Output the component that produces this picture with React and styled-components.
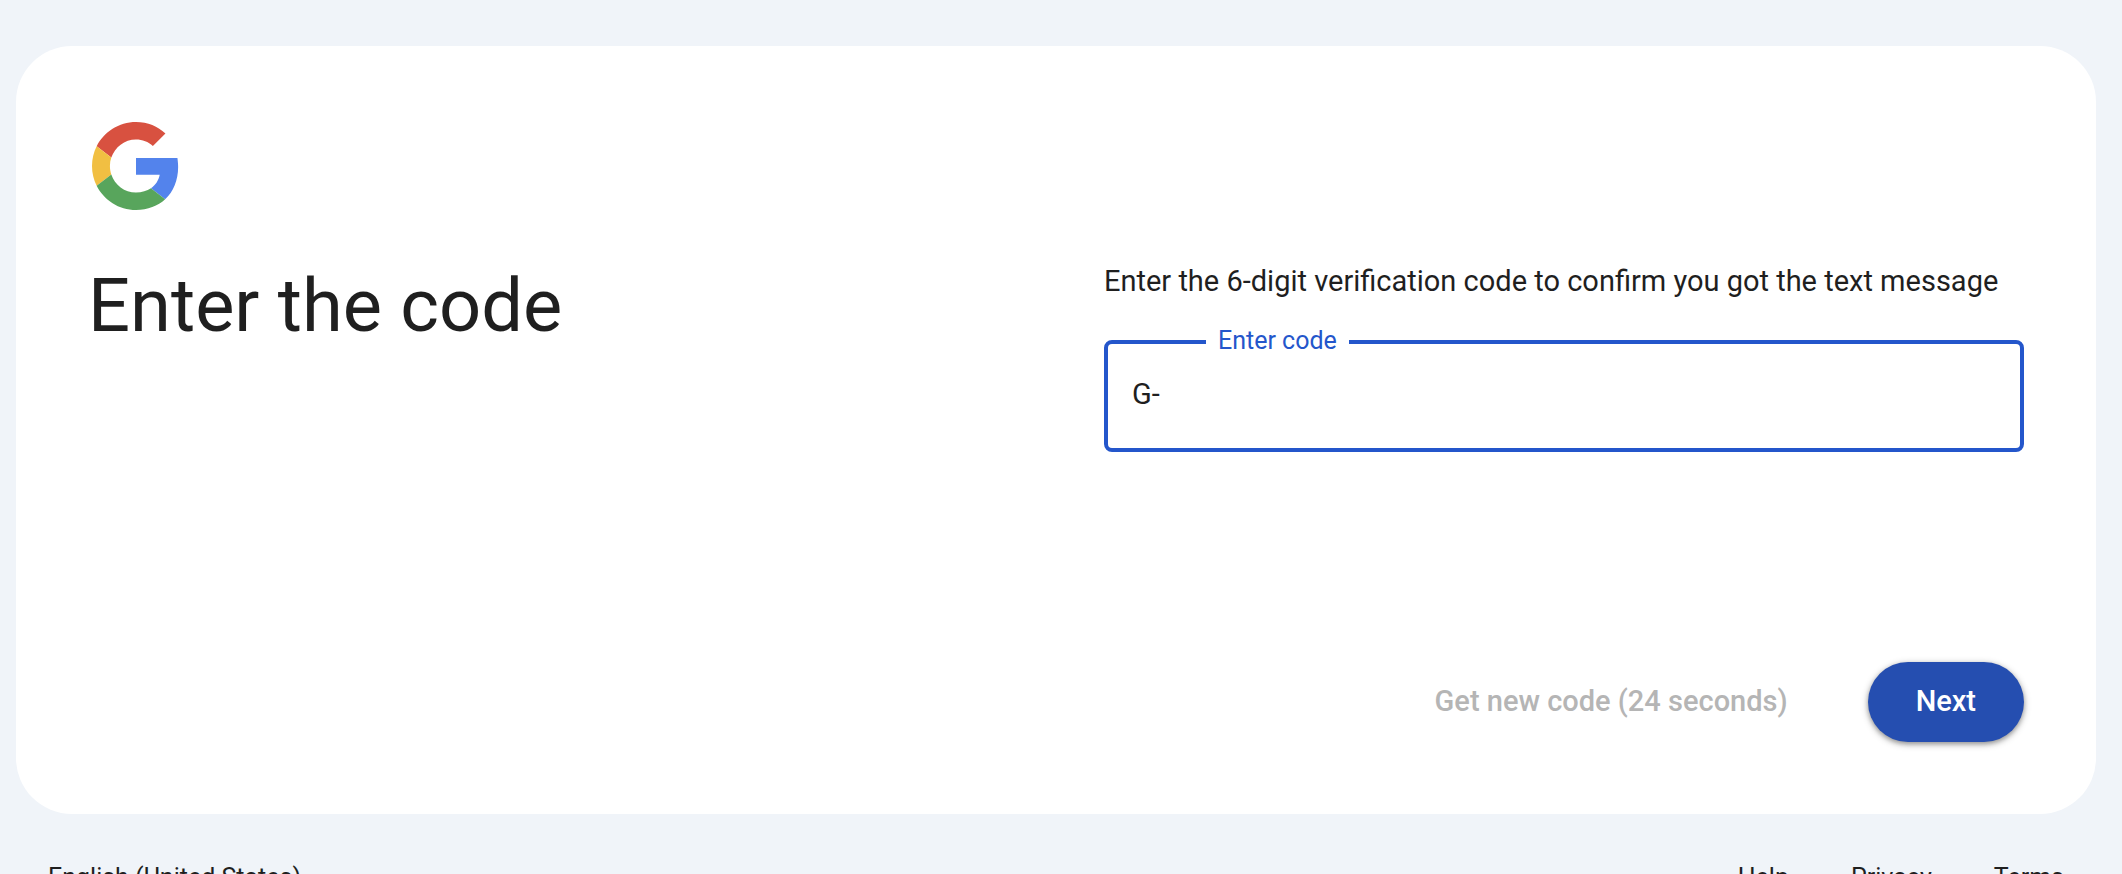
import React, { useState } from "react";
import styled, { createGlobalStyle } from "styled-components";

const GlobalStyle = createGlobalStyle`
  * { box-sizing: border-box; }
  html { scrollbar-width: none; }
  body {
    margin: 0;
    background: #f0f4f9;
    color: #1f1f1f;
    font-family: "Google Sans", Roboto, "Liberation Sans", sans-serif;
    font-size: 29px;
  }
  button, input { font: inherit; }
`;

const Page = styled.div`
  padding: 46px 26px 32px 16px;
`;

const Card = styled.main`
  display: flex;
  flex-direction: column;
  min-height: 768px;
  padding: 72px;
  border-radius: 56px;
  background: #fff;
`;

const Logo = styled.svg`
  width: 96px;
  height: 96px;
  padding: 4px;
`;

const Columns = styled.div`
  display: grid;
  grid-template-columns: 1fr 1fr;
  gap: 96px;
  padding-top: 46px;
`;

const Title = styled.h1`
  margin: 0;
  font-size: 74px;
  line-height: 92px;
  font-weight: 400;
`;

const Hint = styled.p`
  margin: 0 0 38px;
  line-height: 42px;
`;

const Field = styled.div`
  position: relative;
`;

const FieldLabel = styled.label`
  position: absolute;
  top: -14px;
  left: 102px;
  padding: 0 12px;
  background: #fff;
  color: #2456cb;
  font-size: 25px;
  line-height: 30px;
`;

const CodeInput = styled.input`
  display: block;
  width: 100%;
  height: 112px;
  padding: 20px 24px 24px;
  border: 4px solid #2456cb;
  border-radius: 8px;
  outline: none;
  background: transparent;
  color: inherit;
`;

const Actions = styled.div`
  display: flex;
  justify-content: flex-end;
  gap: 48px;
  margin-top: auto;
`;

const Button = styled.button`
  height: 80px;
  border: 0;
  border-radius: 40px;
  font-weight: 500;
  padding: 0 ${(p) => (p.$primary ? 48 : 32)}px 2px;
  background: ${(p) => (p.$primary ? "#254eb0" : "transparent")};
  color: ${(p) => (p.$primary ? "#fff" : "#b5b5b5")};
  box-shadow: ${(p) =>
    p.$primary ? "0 2px 4px rgba(0,0,0,.3), 0 2px 6px 2px rgba(0,0,0,.15)" : "none"};
`;

const Footer = styled.footer`
  display: flex;
  justify-content: space-between;
  padding: 48px 32px 0;
  font-size: 25px;
  line-height: 32px;
`;

const FooterLinks = styled.nav`
  display: flex;
  gap: 62px;
`;

const FooterLink = styled.a`
  color: inherit;
  text-decoration: none;
`;

function GoogleLogo() {
  return (
    <Logo viewBox="0 0 48 48" role="img" aria-label="Google">
      <path fill="#d85140" d="M24 9.5c3.54 0 6.71 1.22 9.21 3.6l6.85-6.85C35.9 2.38 30.47 0 24 0 14.62 0 6.51 5.38 2.56 13.22l7.98 6.19C12.43 13.72 17.74 9.5 24 9.5z" />
      <path fill="#5383ec" d="M46.98 24.55c0-1.57-.15-3.09-.38-4.95H24v9.22h12.94c-.58 2.96-2.26 5.68-4.78 7.38l7.73 6c4.51-4.18 7.09-10.36 7.09-17.65z" />
      <path fill="#f1bf42" d="M10.53 28.59c-.48-1.45-.76-2.99-.76-4.59s.27-3.14.76-4.59l-7.98-6.19C.92 16.46 0 20.12 0 24c0 3.88.92 7.54 2.56 10.78l7.97-6.19z" />
      <path fill="#58a55c" d="M24 48c6.48 0 11.93-2.13 15.89-5.81l-7.73-6c-2.15 1.45-4.92 2.3-8.16 2.3-6.26 0-11.57-4.22-13.47-9.91l-7.98 6.19C6.51 42.62 14.62 48 24 48z" />
    </Logo>
  );
}

export default function App() {
  const [code, setCode] = useState("G-");
  return (
    <>
      <GlobalStyle />
      <Page>
        <Card>
          <GoogleLogo />
          <Columns>
            <Title>Enter the code</Title>
            <div>
              <Hint>Enter the 6-digit verification code to confirm you got the text message</Hint>
              <Field>
                <CodeInput id="code" value={code} onChange={(e) => setCode(e.target.value)} />
                <FieldLabel htmlFor="code">Enter code</FieldLabel>
              </Field>
            </div>
          </Columns>
          <Actions>
            <Button type="button" disabled>Get new code (24 seconds)</Button>
            <Button type="button" $primary>Next</Button>
          </Actions>
        </Card>
        <Footer>
          <span>English (United States)</span>
          <FooterLinks>
            <FooterLink href="#help">Help</FooterLink>
            <FooterLink href="#privacy">Privacy</FooterLink>
            <FooterLink href="#terms">Terms</FooterLink>
          </FooterLinks>
        </Footer>
      </Page>
    </>
  );
}
